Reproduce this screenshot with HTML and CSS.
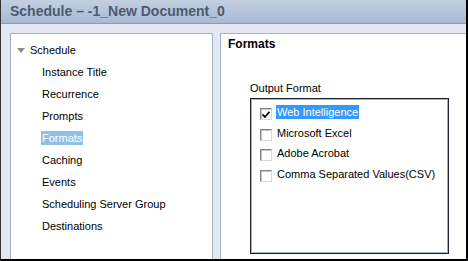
FILE: index.html
```html
<!DOCTYPE html>
<html lang="en">
<head>
    <meta charset="UTF-8">
    <title>Schedule</title>
    <link rel="stylesheet" href="styles.css">
</head>
<body>
    <div class="window">
        <div class="titlebar">Schedule &ndash; -1_New Document_0</div>
        <div class="main">
            <div class="nav">
                <div class="nav-root">
                    <span class="arrow"></span>
                    <span>Schedule</span>
                </div>
                <div class="nav-item"><span>Instance Title</span></div>
                <div class="nav-item"><span>Recurrence</span></div>
                <div class="nav-item"><span>Prompts</span></div>
                <div class="nav-item"><span class="selected">Formats</span></div>
                <div class="nav-item"><span>Caching</span></div>
                <div class="nav-item"><span>Events</span></div>
                <div class="nav-item"><span>Scheduling Server Group</span></div>
                <div class="nav-item"><span>Destinations</span></div>
            </div>
            <div class="content">
                <h2>Formats</h2>
                <div class="field-label">Output Format</div>
                <div class="format-list">
                    <div class="format">
                        <span class="check checked">
                            <svg width="8" height="7" viewBox="0 0 8 7"><path d="M0.5 3.5 L3 6 L7.5 0.8" fill="none" stroke="#000" stroke-width="1.8"/></svg>
                        </span>
                        <span class="format-name selected-blue">Web Intelligence</span>
                    </div>
                    <div class="format">
                        <span class="check"></span>
                        <span class="format-name">Microsoft Excel</span>
                    </div>
                    <div class="format">
                        <span class="check"></span>
                        <span class="format-name">Adobe Acrobat</span>
                    </div>
                    <div class="format">
                        <span class="check"></span>
                        <span class="format-name">Comma Separated Values(CSV)</span>
                    </div>
                </div>
            </div>
        </div>
    </div>
</body>
</html>
```

FILE: styles.css
```css
html, body { margin: 0; padding: 0; }
body { font-family: "Liberation Sans", Arial, sans-serif; font-size: 11px; color: #000; }

.window {
    width: 468px;
    height: 261px;
    box-sizing: border-box;
    border-left: 1px solid #333;
    border-right: 2px solid #000;
    border-bottom: 2px solid #000;
    background-color: #e3e8f1;
    display: flex;
    flex-direction: column;
    overflow: hidden;
}

.titlebar {
    height: 23px;
    line-height: 23px;
    padding-left: 9px;
    font-size: 14px;
    font-weight: bold;
    color: #4d5b70;
    background: linear-gradient(#c2cfe0, #a8bad3);
    border-bottom: 1px solid #8a9bb7;
}

.main {
    flex: 1;
    display: flex;
    gap: 7px;
    padding: 9px 0 0 9px;
    min-height: 0;
}

.nav {
    width: 201px;
    background-color: #fff;
    border: 1px solid #9fb0cb;
    border-bottom: none;
    padding-top: 5px;
}
.nav-root, .nav-item {
    height: 22px;
    display: flex;
    align-items: center;
}
.nav-root { padding-left: 6px; gap: 5px; }
.arrow {
    width: 0;
    height: 0;
    border-left: 4px solid transparent;
    border-right: 4px solid transparent;
    border-top: 5px solid #8c8c8c;
}
.nav-item span { margin-left: 30px; padding: 1px 1px; }
.nav-item .selected { background-color: #8ec0e8; color: #fff; }

.content {
    flex: 1;
    background-color: #fff;
    border: 1px solid #9fb0cb;
    border-right: none;
    border-bottom: none;
    padding-left: 7px;
}
.content h2 {
    margin: 0;
    font-size: 12px;
    line-height: 20px;
}
.field-label {
    margin: 27px 0 0 22px;
    line-height: 14px;
}
.format-list {
    margin: 3px 0 0 22px;
    width: 199px;
    height: 156px;
    border: 1px solid #1e2230;
    box-shadow: inset 0 0 0 1px #a3b0c8;
    padding-top: 3px;
    box-sizing: border-box;
}
.format {
    height: 20.5px;
    display: flex;
    align-items: center;
    padding-left: 9px;
}
.check {
    width: 12px;
    height: 12px;
    box-sizing: border-box;
    border: 1px solid;
    border-color: #858585 #d8d8d8 #d8d8d8 #858585;
    box-shadow: inset 1px 1px 0 #c4c4c4;
    margin-top: 4px;
    display: flex;
    align-items: center;
    justify-content: center;
    background-color: #fff;
}
.format-name { margin-left: 4px; padding: 1px 1px; }
.selected-blue { background-color: #3399ff; color: #fff; }
```
